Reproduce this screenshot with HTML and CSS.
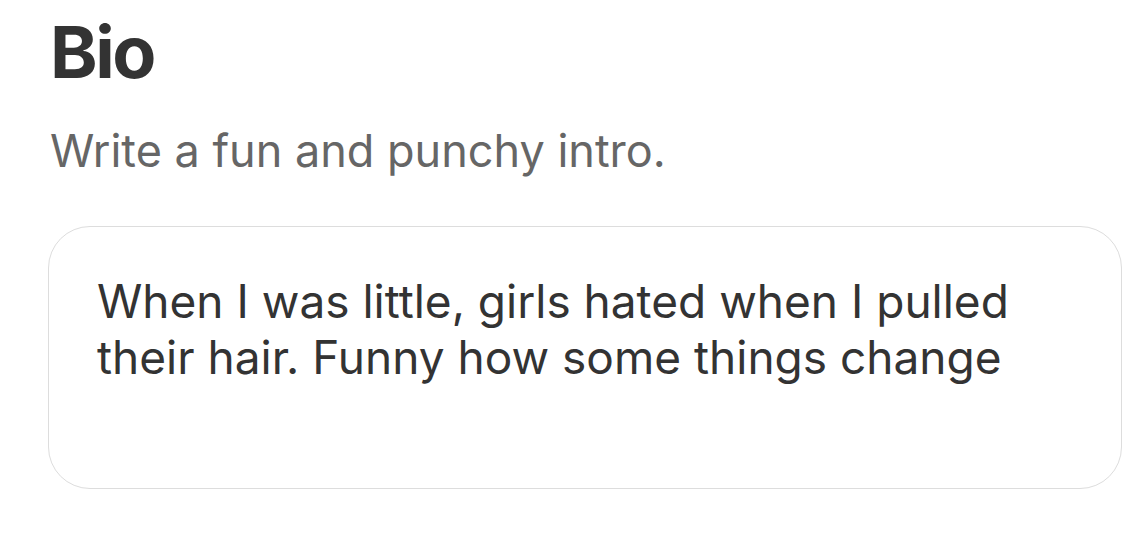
FILE: index.html
```html
<!DOCTYPE html>
<html>
<head>
<meta charset="utf-8">
<link rel="stylesheet" href="styles.css">
</head>
<body>
<main class="section">
  <h1 class="title">Bio</h1>
  <p class="subtitle">Write a fun and punchy intro.</p>
  <div class="bio-box">
    <p class="bio-text">When I was little, girls hated when I pulled their hair. Funny how some things change</p>
  </div>
</main>
</body>
</html>
```

FILE: styles.css
```css
html, body {
  margin: 0;
  padding: 0;
  background: #ffffff;
}
body {
  font-family: "Inter", "Liberation Sans", sans-serif;
  width: 1140px;
  height: 559px;
  overflow: hidden;
}
.section {
  padding: 12px 18px 0 48px;
  display: flex;
  flex-direction: column;
}
.title {
  margin: 0 0 0 2px;
  font-size: 72px;
  line-height: 80px;
  font-weight: 700;
  letter-spacing: -2.5px;
  color: #333333;
}
.subtitle {
  margin: 34px 0 0 2px;
  font-size: 45px;
  line-height: 50px;
  color: #666666;
}
.bio-box {
  margin-top: 50px;
  height: 263px;
  border: 1px solid #dddddd;
  border-radius: 42px;
  padding: 46px 40px 0 48px;
  box-sizing: border-box;
}
.bio-text {
  margin: 0;
  font-size: 46px;
  line-height: 56px;
  color: #333333;
  width: 960px;
}
```
